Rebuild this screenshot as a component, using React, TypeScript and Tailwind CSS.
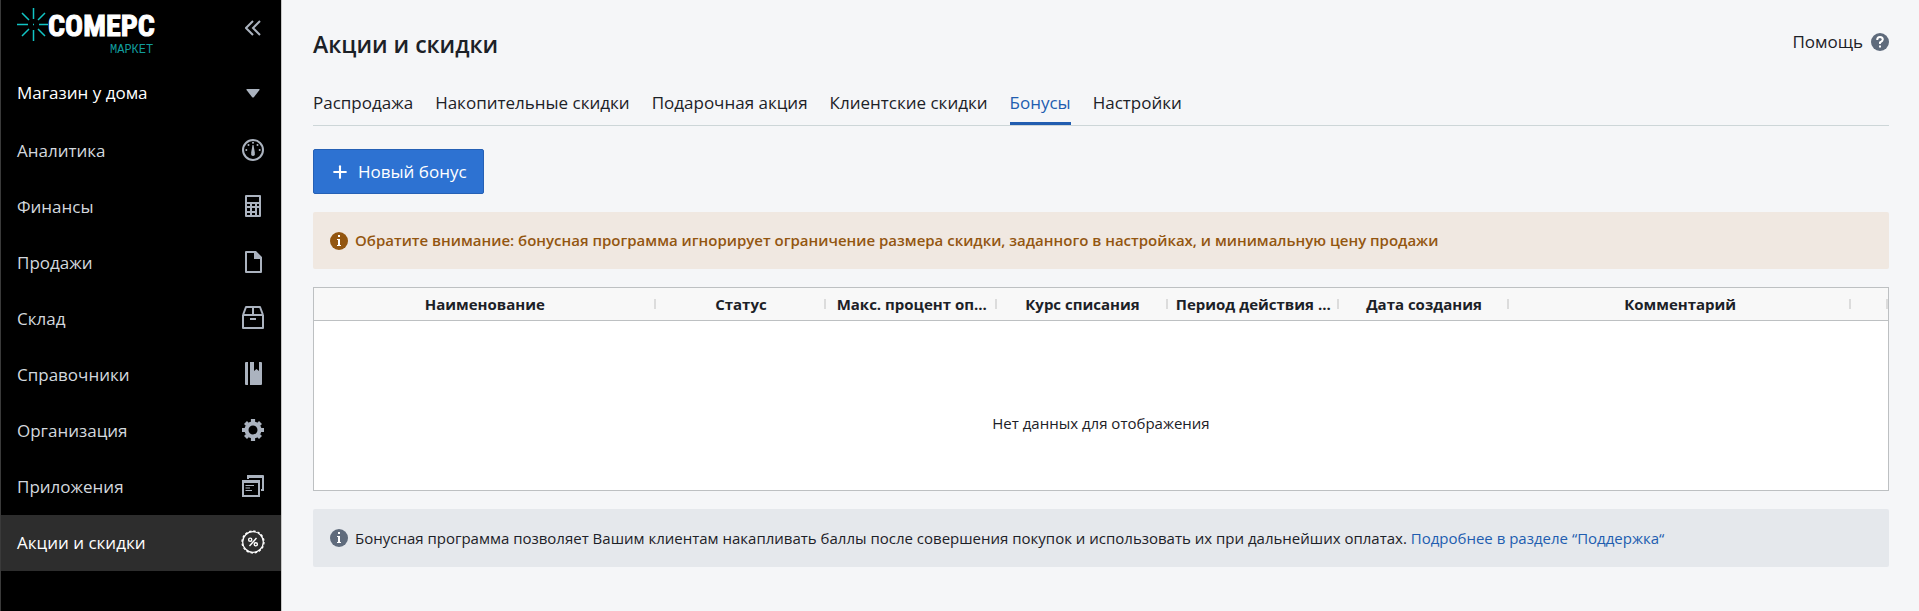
import React, { useState } from 'react';
import { Plus } from 'lucide-react';

interface MenuItem {
  id: string;
  label: string;
  icon: React.ReactNode;
}

const menuItems: MenuItem[] = [
  {
    id: 'analytics',
    label: 'Аналитика',
    icon: (
      <>
        <circle cx="12" cy="12" r="10" fill="none" stroke="currentColor" strokeWidth="2" />
        <path d="M11.500 7h1l1.300 7.500V17q-1.800 2-3.600 0v-2.500z" />
        <circle cx="12" cy="4.800" r="1" />
        <circle cx="7.500" cy="7" r="1" />
        <circle cx="16.500" cy="7" r="1" />
        <circle cx="5.300" cy="12" r="1" />
        <circle cx="18.700" cy="12" r="1" />
      </>
    ),
  },
  {
    id: 'finance',
    label: 'Финансы',
    icon: (
      <path
        fillRule="evenodd"
        d="M5 1h14q1 0 1 1v20q0 1-1 1H5q-1 0-1-1V2q0-1 1-1zM6 3v5h12V3zM6 10v2h3v-2zM11 10v2h3v-2zM16 10v2h2v-2zM6 14v3h3v-3zM11 14v3h3v-3zM16 14v7h2v-7zM6 19v2h3v-2zM11 19v2h3v-2z"
      />
    ),
  },
  {
    id: 'sales',
    label: 'Продажи',
    icon: <path fillRule="evenodd" d="M5 1h10l6 6v15q0 1-1 1H5q-1 0-1-1V2q0-1 1-1zM6 3v18h13V9h-6V3z" />,
  },
  {
    id: 'stock',
    label: 'Склад',
    icon: (
      <g fill="none" stroke="currentColor" strokeWidth="2" strokeLinejoin="round">
        <path d="M2 9h20v13H2zM2 9l3-8h14l3 8M12 1v8" />
        <path d="M9 13h6" />
      </g>
    ),
  },
  {
    id: 'catalogs',
    label: 'Справочники',
    icon: <path d="M5 0h2v23H5q-1 0-1-1V1q0-1 1-1zM9 0h4v9l2.500-2 2.500 2V0h2q1 0 1 1v21q0 1-1 1H9z" />,
  },
  {
    id: 'organization',
    label: 'Организация',
    icon: (
      <>
        <circle cx="12" cy="12" r="6.500" fill="none" stroke="currentColor" strokeWidth="4" />
        <path
          d="M12 1v3M12 20v3M1 12h3M20 12h3M4.500 4.500l2 2M17.500 17.500l2 2M4.500 19.500l2-2M17.500 6.500l2-2"
          stroke="currentColor"
          strokeWidth="4.200"
        />
      </>
    ),
  },
  {
    id: 'apps',
    label: 'Приложения',
    icon: (
      <>
        <path d="M6 1h16q1 0 1 1v15h-3v-2h1V4H8v1H6z" />
        <path fillRule="evenodd" d="M1 6h18v17H1zM3 9v12h14V9z" />
        <path d="M4.500 11.500H13M4.500 14H9M4.500 16.500H11" stroke="currentColor" strokeWidth="1.200" />
      </>
    ),
  },
  {
    id: 'promo',
    label: 'Акции и скидки',
    icon: (
      <>
        <circle cx="12" cy="12" r="10.300" fill="none" stroke="currentColor" strokeWidth="1.200" />
        <circle cx="12" cy="12" r="11" fill="none" stroke="currentColor" strokeWidth="1.300" strokeDasharray="2.400 1.920" />
        <g fill="none" stroke="currentColor" strokeWidth="1.400">
          <circle cx="9.200" cy="9.700" r="1.600" />
          <circle cx="14.800" cy="14.300" r="1.600" />
          <path d="M15.500 8 8.500 16" />
        </g>
      </>
    ),
  },
];

const tabs = ['Распродажа', 'Накопительные скидки', 'Подарочная акция', 'Клиентские скидки', 'Бонусы', 'Настройки'];

const columns = [
  { title: 'Наименование', width: 'w-[22%]' },
  { title: 'Статус', width: 'w-[11%]' },
  { title: 'Макс. процент оп...', width: 'w-[11%]' },
  { title: 'Курс списания', width: 'w-[11%]' },
  { title: 'Период действия ...', width: 'w-[11%]' },
  { title: 'Дата создания', width: 'w-[11%]' },
  { title: 'Комментарий', width: 'w-[22%]' },
];

const Logo: React.FC = () => (
  <a href="#" aria-label="Сомерс Маркет" className="block">
    <svg width="150" height="48" viewBox="0 0 150 48">
      <g stroke="#12c4c4" strokeWidth="1.500">
        <path d="M16.500 0v11M16.500 22v11M0 16.500h11M22 16.500h9M5 5l7 7M21 21l7 7M28 5l-7 7M12 21l-7 7" />
        <path d="M16 16.500h1" />
      </g>
      <text
        x="31"
        y="28"
        fill="#fff"
        stroke="#fff"
        strokeWidth="1"
        fontSize="30"
        fontWeight="700"
        fontFamily="'Liberation Sans Narrow', 'Roboto Condensed', sans-serif"
      >
        СОМЕРС
      </text>
      <text x="93" y="45" fill="#119c9c" fontSize="12" fontFamily="'Liberation Mono', monospace">
        МАРКЕТ
      </text>
    </svg>
  </a>
);

const Sidebar: React.FC = () => {
  const [active, setActive] = useState('promo');

  return (
    <aside className="w-[282px] shrink-0 bg-black border-l border-[#3a3a3a] border-r border-r-[#c8c8c8]">
      <div className="h-[65px] pl-4 pr-5 pt-2 flex items-start justify-between">
        <Logo />
        <button type="button" aria-label="Свернуть меню" className="mt-3 text-[#abb3bf]">
          <svg width="16" height="16" viewBox="0 0 16 16" fill="none" stroke="currentColor" strokeWidth="2">
            <path d="M8 1 1 8l7 7M15 1 8 8l7 7" />
          </svg>
        </button>
      </div>
      <button type="button" className="w-full h-[58px] pl-4 pr-5 pb-[2px] flex items-center justify-between text-white">
        Магазин у дома
        <svg width="16" height="16" viewBox="0 0 16 16" fill="#abb3bf">
          <path d="M2 4h12q1 0 .5 1L9 12q-1 1-2 0L1.500 5Q1 4 2 4z" />
        </svg>
      </button>
      <nav>
        {menuItems.map((item) => (
          <a
            key={item.id}
            href={`#${item.id}`}
            onClick={() => setActive(item.id)}
            className={`h-14 px-4 flex items-center justify-between ${
              active === item.id ? 'bg-[#2d2d2d] text-white' : 'text-[#d3d8de]'
            }`}
          >
            {item.label}
            <svg
              width="24"
              height="24"
              viewBox="0 0 24 24"
              fill="currentColor"
              className={`mb-[2px] ${active === item.id ? 'text-white' : 'text-[#abb3bf]'}`}
            >
              {item.icon}
            </svg>
          </a>
        ))}
      </nav>
    </aside>
  );
};

const InfoIcon: React.FC = () => (
  <svg width="18" height="18" viewBox="0 0 18 18" className="shrink-0">
    <circle cx="9" cy="9" r="9" fill="currentColor" />
    <path d="M8 3h2v2H8zM7 7h3v6h1v1H7v-1h1V8H7z" fill="#fff" />
  </svg>
);

const ColumnDivider: React.FC = () => <span className="absolute right-0 top-[11px] w-[2px] h-[10px] bg-[#dcdcdc]" />;

const App: React.FC = () => {
  const [activeTab, setActiveTab] = useState('Бонусы');

  return (
    <div className="min-h-screen flex bg-[#f5f6f8] font-['Open_Sans','Noto_Sans',sans-serif] text-[17px] text-[#1c2127]">
      <Sidebar />

      <main className="flex-1 min-w-0 pl-[31px] pr-[30px] pb-8">
        <header className="h-[78px] pt-6 flex items-start justify-between">
          <h1 className="text-[23px] leading-10 font-semibold">Акции и скидки</h1>
          <a href="#help" className="h-9 flex items-center gap-2">
            Помощь
            <svg width="18" height="18" viewBox="0 0 18 18">
              <circle cx="9" cy="9" r="9" fill="#5f6b7c" />
              <path d="M6.200 7Q6.200 4 9 4t2.800 2.600Q11.800 8 9 9.500V11" fill="none" stroke="#fff" strokeWidth="2" />
              <path d="M8 12.500h2v2H8z" fill="#fff" />
            </svg>
          </a>
        </header>

        {/* Tabs */}
        <div role="tablist" className="flex gap-[22px] border-b border-[#cdd6d8]">
          {tabs.map((tab) => (
            <button
              key={tab}
              type="button"
              role="tab"
              aria-selected={activeTab === tab}
              onClick={() => setActiveTab(tab)}
              className={`h-[47px] pt-1.5 border-b-3 ${
                activeTab === tab ? 'border-[#215db0] text-[#215db0]' : 'border-transparent'
              }`}
            >
              {tab}
            </button>
          ))}
        </div>

        <button
          type="button"
          className="mt-[23px] h-[45px] px-4 flex items-center gap-2 rounded-xs border border-[#2560b5] bg-[#2d72d2] text-white"
        >
          <Plus className="w-5 h-5" strokeWidth={2.5} />
          Новый бонус
        </button>

        {/* Warning */}
        <div className="mt-[18px] h-[57px] px-[17px] flex items-center gap-[7px] rounded-xs bg-[#f0e8e1] text-[15px] font-semibold text-[#935610]">
          <InfoIcon />
          Обратите внимание: бонусная программа игнорирует ограничение размера скидки, заданного в настройках, и
          минимальную цену продажи
        </div>

        {/* Bonus list */}
        <div className="mt-[18px] border border-[#bdc0c2] bg-white text-[15px]">
          <table className="w-full table-fixed">
            <thead>
              <tr className="h-8 bg-[#f8f8f8] border-b border-[#bdc0c2]">
                {columns.map((column) => (
                  <th key={column.title} className={`relative px-1 font-bold whitespace-nowrap ${column.width}`}>
                    {column.title}
                    <ColumnDivider />
                  </th>
                ))}
                <th className="relative w-[37px]" aria-label="Действия">
                  <ColumnDivider />
                </th>
              </tr>
            </thead>
            <tbody>
              <tr>
                <td colSpan={columns.length + 1} className="h-[170px] pt-9 text-center">
                  Нет данных для отображения
                </td>
              </tr>
            </tbody>
          </table>
        </div>

        <div className="mt-[18px] h-[58px] px-[17px] flex items-center gap-[7px] rounded-xs bg-[#e5e8ec] text-[15px]">
          <span className="text-[#5f6b7c]">
            <InfoIcon />
          </span>
          <p>
            Бонусная программа позволяет Вашим клиентам накапливать баллы после совершения покупок и использовать их при
            дальнейших оплатах.{' '}
            <a href="#support" className="text-[#215db0]">
              Подробнее в разделе “Поддержка“
            </a>
          </p>
        </div>
      </main>
    </div>
  );
};

export default App;
